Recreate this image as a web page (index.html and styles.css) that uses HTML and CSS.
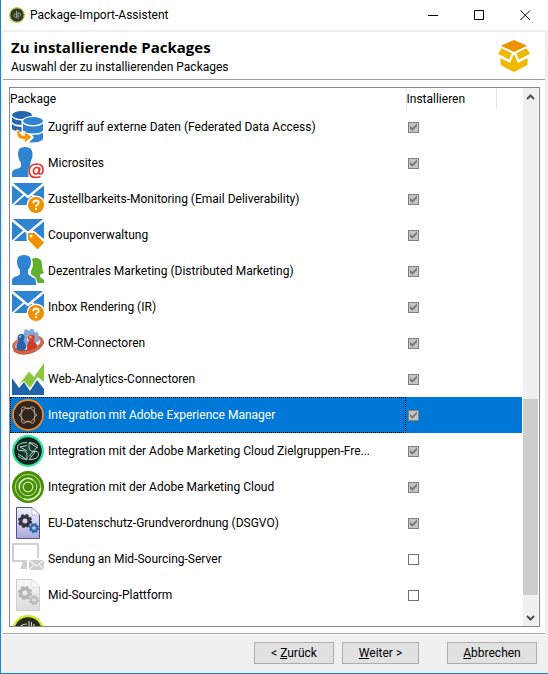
FILE: index.html
```html
<!DOCTYPE html>
<html lang="de">
<head>
<meta charset="utf-8">
<title>Package-Import-Assistent</title>
<link rel="stylesheet" href="styles.css">
</head>
<body>
<svg class="defs" aria-hidden="true">
  <defs>
    <linearGradient id="page-blue" x1="0" y1="0" x2="0" y2="1"><stop offset="0" stop-color="#f2f2fb"/><stop offset="1" stop-color="#a9a9dc"/></linearGradient>
    <linearGradient id="page-grey" x1="0" y1="0" x2="0" y2="1"><stop offset="0" stop-color="#f7f7f7"/><stop offset="1" stop-color="#dcdcdc"/></linearGradient>
    <radialGradient id="dark-green"><stop offset="0" stop-color="#1d4a3c"/><stop offset="1" stop-color="#0b1a17"/></radialGradient>
    <linearGradient id="ring-red" x1="0" y1="0" x2="0" y2="1"><stop offset="0" stop-color="#e08468"/><stop offset="1" stop-color="#b8432c"/></linearGradient>
  </defs>
  <symbol id="gear" viewBox="-8 -8 16 16">
    <circle r="4.500" fill="none" stroke="currentColor" stroke-width="3.600"/>
    <circle r="6.500" fill="none" stroke="currentColor" stroke-width="2" stroke-dasharray="2.900 2.205"/>
  </symbol>
  <symbol id="envelope" viewBox="0 0 32 32">
    <path fill="#2f84d1" d="M1 0H31L16 12.500Z"/>
    <path fill="#2f84d1" d="M0 2.500L11 11.500L0 21.500ZM32 2.500V20L21 11.500ZM12.500 12.800L16 15.500L19.500 12.800L30 22H2Z"/>
  </symbol>
  <symbol id="mail-question" viewBox="0 0 32 32">
    <use href="#envelope"/>
    <circle cx="24" cy="22" r="9.500" fill="#fff"/>
    <circle cx="24" cy="22" r="8" fill="#f09000"/>
    <path fill="none" stroke="#fff" stroke-width="1.800" d="M21.300 20.200Q21.300 17.500 24 17.500T26.700 19.800Q26.700 21 25 22Q24 22.700 24 24"/>
    <rect x="23" y="25" width="2" height="2" fill="#fff"/>
  </symbol>
</svg>

<main class="window">
  <header class="titlebar">
    <svg class="app-icon" viewBox="0 0 16 16" aria-hidden="true">
      <circle cx="8" cy="8" r="7.200" fill="#33372a" stroke="#a7c22b" stroke-width="1.200"/>
      <path fill="none" stroke="#a9ae9b" stroke-width=".9" d="M7.500 7H6.500Q5 7 5 8.500T6.500 10.500H7.500V4M9 12V6H10Q11.500 6 11.500 7.500T10.500 9.500"/>
    </svg>
    <span class="app-title">Package-Import-Assistent</span>
    <button class="caption" type="button" title="Minimieren"><svg viewBox="0 0 11 11"><path d="M0 5.500H10"/></svg></button>
    <button class="caption" type="button" title="Maximieren"><svg viewBox="0 0 11 11"><path d="M.5 .5H9.500V9.500H.5Z"/></svg></button>
    <button class="caption" type="button" title="Schließen"><svg viewBox="0 0 11 11"><path d="M.5 .5L10 10M10 .5L.5 10"/></svg></button>
  </header>

  <div class="frame">
    <section class="banner">
      <div class="banner-text">
        <h1>Zu installierende Packages</h1>
        <p>Auswahl der zu installierenden Packages</p>
      </div>
      <svg class="banner-logo" viewBox="0 0 32 32" aria-hidden="true">
        <path fill="#ee9200" d="M16 0L29 5.700L16 12L3 5.700Z"/>
        <path fill="#efb902" d="M3.500 8.300L13.800 13.300L11 19.500L0 13.700ZM28.500 8.300L18.200 13.300L21 19.500L32 13.700Z"/>
        <path fill="#efb902" d="M2.500 18L12 23L15.500 15H16.500L20 23L29.500 18V25L16 32L2.500 25Z"/>
      </svg>
    </section>

    <section class="content">
      <div class="list">
        <div class="viewport">
          <table>
            <colgroup><col><col class="col-install"><col class="col-rest"></colgroup>
            <thead><tr><th>Package</th><th>Installieren</th><th></th></tr></thead>
            <tbody>
              <tr><td><label for="p1"><svg class="icon" viewBox="0 0 32 32">
                <ellipse cx="10" cy="4" rx="10" ry="4" fill="#2466ae"/>
                <path fill="#2466ae" d="M0 6Q3 9.500 10 9.500V14Q2 14 0 11ZM0 13Q3 16 10 16V21Q2 20 0 18Z"/>
                <path fill="#fff" d="M9.500 9.500Q12 5 21 5T32 9.500V32H18L9.500 22Z"/>
                <ellipse cx="21" cy="10" rx="10" ry="4" fill="#2f84d1"/>
                <path fill="#2f84d1" d="M11 12.500Q14 15.500 21 15.500T31 12.500V19.500Q29 22.500 21 22.500T11 19.500ZM20 24Q28 24 31 21.500V28Q28 32 17 31.500L22 26.500Z"/>
                <path fill="#f09a00" stroke="#fff" stroke-width=".8" d="M4.500 19Q8 19 8 21Q8 24.500 12.500 24.500V20.500L20 26L12.500 32V28.500Q4.500 28.500 5 22Z"/>
              </svg><span>Zugriff auf externe Daten (Federated Data Access)</span></label></td><td><input type="checkbox" id="p1" checked disabled></td><td></td></tr>

              <tr><td><label for="p2"><svg class="icon" viewBox="0 0 32 32">
                <path fill="#2f84d1" d="M6 6Q6 0 13 0T20.500 6Q21 10 19 14Q18 16 18 19Q15.500 22 16.500 30H0V26Q0 23 4 22Q9 21 9 19V16Q6 12 6 6Z"/>
                <path fill="none" stroke="#e73532" stroke-width="1.700" d="M28.500 29.500Q26.500 30.500 24 30.500Q17.200 30.500 17.200 24T24.500 17Q31 17 31 22.500Q31 27 28.300 27Q26.500 27 27 25L28 20.500M27 23.500Q26.500 27 24 27T21.500 24.500Q21.500 20.500 24.800 20.500Q27.500 20.500 27 23.500"/>
              </svg><span>Microsites</span></label></td><td><input type="checkbox" id="p2" checked disabled></td><td></td></tr>

              <tr><td><label for="p3"><svg class="icon" viewBox="0 0 32 32"><use href="#mail-question"/></svg><span>Zustellbarkeits-Monitoring (Email Deliverability)</span></label></td><td><input type="checkbox" id="p3" checked disabled></td><td></td></tr>

              <tr><td><label for="p4"><svg class="icon" viewBox="0 0 32 32">
                <use href="#envelope"/>
                <path fill="#f09000" stroke="#fff" stroke-width="3" paint-order="stroke" d="M16 15Q16 14 17 14H22.500L32 23.500L25.500 30.500L16 20.500Z"/>
                <circle cx="19" cy="17" r="1.500" fill="#fff"/>
              </svg><span>Couponverwaltung</span></label></td><td><input type="checkbox" id="p4" checked disabled></td><td></td></tr>

              <tr><td><label for="p5"><svg class="icon" viewBox="0 0 32 32">
                <path fill="#60b02c" d="M20 4Q21 2.500 25 3Q30 3.500 30 10Q30 15 32 18L28 19.500V22L32 25V28H25.500L24 23L19 19V16Q21.500 12 21 8Z"/>
                <path fill="#2f84d1" d="M5 6Q5 0 12 0T19 6Q19 12 16 15V18.500Q17 21 23 23.500Q24 25 24 30H0V25Q0 23 4 21.500Q8 20 8 18.500V15Q5 12 5 6Z"/>
              </svg><span>Dezentrales Marketing (Distributed Marketing)</span></label></td><td><input type="checkbox" id="p5" checked disabled></td><td></td></tr>

              <tr><td><label for="p6"><svg class="icon" viewBox="0 0 32 32"><use href="#mail-question"/></svg><span>Inbox Rendering (IR)</span></label></td><td><input type="checkbox" id="p6" checked disabled></td><td></td></tr>

              <tr><td><label for="p7"><svg class="icon" viewBox="0 0 32 32">
                <ellipse cx="16" cy="17" rx="14.500" ry="7" transform="rotate(-12 16 17)" fill="#e6e9f2" stroke="url(#ring-red)" stroke-width="3"/>
                <svg x="8" y="1" width="20" height="20" color="#7fa9dc"><use href="#gear"/></svg>
                <circle cx="9" cy="10.500" r="3.500" fill="#2d62a8"/>
                <path fill="#2d62a8" d="M7 13H11L14 18V22Q9 25 4.500 22V18Z"/>
                <circle cx="19.500" cy="11" r="3.400" fill="#d8452f"/>
                <path fill="#cf3b27" d="M17.500 13.500H21.500L25 18V22Q20 25 15 23V18Z"/>
                <path fill="none" stroke="#cc6247" stroke-width="3.500" d="M2 22.500Q8 28 18 25T30.500 15"/>
                <circle cx="8" cy="9.500" r="1.300" fill="#8db9ea"/><circle cx="18.500" cy="10" r="1.200" fill="#f5a899"/>
              </svg><span>CRM-Connectoren</span></label></td><td><input type="checkbox" id="p7" checked disabled></td><td></td></tr>

              <tr><td><label for="p8"><svg class="icon" viewBox="0 0 32 32">
                <path fill="#8dc63f" d="M32 0V19L25.500 14L18 25L12 18L7.500 21L17 8.500L22 14Z"/>
                <path fill="#1f63a8" d="M0 15L7 25L12 19L18 28L25 17L32 26V32H0Z"/>
              </svg><span>Web-Analytics-Connectoren</span></label></td><td><input type="checkbox" id="p8" checked disabled></td><td></td></tr>

              <tr class="selected"><td><label for="p9"><svg class="icon" viewBox="0 0 32 32">
                <circle cx="16" cy="16" r="15" fill="#32251f" stroke="#f08a20" stroke-width="1.800"/>
                <g fill="none" stroke="#c9b090" stroke-width=".9">
                  <circle cx="16" cy="16" r="7"/>
                  <path d="M13 8Q16 12 19 8Q23 7 22.500 11.500Q21 14 25 16Q21 18 22.500 20.500Q23 25 19 24Q16 20 13 24Q9 25 9.500 20.500Q11 18 7 16Q11 14 9.500 11.500Q9 7 13 8Z"/>
                </g>
              </svg><span>Integration mit Adobe Experience Manager</span></label></td><td><input type="checkbox" id="p9" checked disabled></td><td></td></tr>

              <tr><td><label for="p10"><svg class="icon" viewBox="0 0 32 32">
                <circle cx="16" cy="16" r="14.800" fill="url(#dark-green)" stroke="#2ce59b" stroke-width="2.200"/>
                <g fill="none" stroke="#c5e0d6" stroke-width=".9">
                  <path d="M15 7.500Q6 7.500 5.500 12T10 15.500Q15 15.500 15 20.500V24.500L6 19M15 10.500L8 12L15 16M6 21Q9 24.500 15 24.500"/>
                  <path d="M17 24.500Q26 24.500 26.500 20T22 16.500Q17 16.500 17 11.500V7.500L26 13M17 21.500L25 12M26 11Q23 7.500 17 7.500M17 24.500L23 17"/>
                </g>
              </svg><span>Integration mit der Adobe Marketing Cloud Zielgruppen-Fre...</span></label></td><td><input type="checkbox" id="p10" checked disabled></td><td></td></tr>

              <tr><td><label for="p11"><svg class="icon" viewBox="0 0 32 32">
                <circle cx="16" cy="16" r="16" fill="#479003"/>
                <g fill="none" stroke="#dcebc8">
                  <circle cx="16" cy="16" r="12.700" stroke-width=".8"/>
                  <path stroke-width="1.800" d="M28.500 17A12.500 12.500 0 0 1 12 28"/>
                  <circle cx="16" cy="16" r="8.800" stroke-width=".9"/>
                  <path stroke-width="1.600" d="M7.500 18A8.700 8.700 0 0 1 21 9"/>
                  <circle cx="16" cy="16" r="4.800" stroke-width="1.200"/>
                </g>
              </svg><span>Integration mit der Adobe Marketing Cloud</span></label></td><td><input type="checkbox" id="p11" checked disabled></td><td></td></tr>

              <tr><td><label for="p12"><svg class="icon" viewBox="0 0 32 32">
                <path fill="url(#page-blue)" stroke="#51518c" d="M4.500 .5H20L27.500 8V31.500H4.500Z"/>
                <path fill="#fff" stroke="#a4a4cc" stroke-width=".7" d="M20 .5V8H27.500Z"/>
                <svg x="5.500" y="6.500" width="15" height="15" color="#34363d"><use href="#gear"/></svg>
                <svg x="16.500" y="15.500" width="11" height="11" color="#2b6cae"><use href="#gear"/></svg>
              </svg><span>EU-Datenschutz-Grundverordnung (DSGVO)</span></label></td><td><input type="checkbox" id="p12" checked disabled></td><td></td></tr>

              <tr><td><label for="p13"><svg class="icon" viewBox="0 0 32 32">
                <path fill="none" stroke="#d0d0d0" stroke-width="2" d="M15 18H1V1H26V15"/>
                <path fill="#cecece" d="M10.500 19H15V26H8.500Z"/>
                <path fill="#cecece" d="M17 17H32V27H17Z"/>
                <path fill="none" stroke="#fff" d="M17 17L24.500 23L32 17M17 27L22 21.500M32 27L27 21.500"/>
              </svg><span>Sendung an Mid-Sourcing-Server</span></label></td><td><input type="checkbox" id="p13"></td><td></td></tr>

              <tr><td><label for="p14"><svg class="icon" viewBox="0 0 32 32">
                <path fill="url(#page-grey)" stroke="#cfcfcf" d="M4.500 .5H20L27.500 8V31.500H4.500Z"/>
                <path fill="#fff" stroke="#d8d8d8" stroke-width=".7" d="M20 .5V8H27.500Z"/>
                <svg x="5.500" y="6.500" width="15" height="15" color="#b5b5b5"><use href="#gear"/></svg>
                <svg x="16.500" y="15.500" width="11" height="11" color="#bdbdbd"><use href="#gear"/></svg>
              </svg><span>Mid-Sourcing-Plattform</span></label></td><td><input type="checkbox" id="p14"></td><td></td></tr>

              <tr><td><svg class="icon" viewBox="0 0 32 32">
                <circle cx="16" cy="16" r="14.800" fill="#282c1f" stroke="#cdeb1c" stroke-width="2.200"/>
                <path fill="none" stroke="#d5dac5" stroke-width="1.100" d="M17 6V20M19.500 7V22M15 9Q9 9 8 13M15 11.500Q12 11.500 11 14M22 9V20"/>
              </svg></td><td></td><td></td></tr>
            </tbody>
          </table>
        </div>
        <div class="scrollbar">
          <button type="button" title="Nach oben"><svg viewBox="0 0 9 6"><path d="M1 5L4.500 1.500L8 5"/></svg></button>
          <div class="track"><div class="before"></div><div class="thumb"></div><div class="after"></div></div>
          <button type="button" title="Nach unten"><svg viewBox="0 0 9 6"><path d="M1 1L4.500 4.500L8 1"/></svg></button>
        </div>
      </div>
    </section>

    <footer class="actions">
      <button type="button" class="back">&lt; <u>Z</u>urück</button>
      <button type="button" class="next"><u>W</u>eiter &gt;</button>
      <button type="button" class="cancel"><u>A</u>bbrechen</button>
    </footer>
  </div>
</main>
</body>
</html>
```
FILE: styles.css
```css
* { box-sizing: border-box; }

body {
  margin: 0;
  font-family: Roboto, "Open Sans", sans-serif;
  font-size: 12px;
  line-height: 16px;
  color: #000;
  background: #fff;
}

button { font: inherit; color: inherit; padding: 0; border: 0; background: none; }

.defs { position: absolute; width: 0; height: 0; }

.window {
  display: flex;
  flex-direction: column;
  height: 100vh;
  border-left: 1px solid #1883d7;
  border-bottom: 1px solid #1883d7;
}

.titlebar { display: flex; align-items: center; height: 30px; padding-left: 8px; flex: none; }
.app-icon { width: 16px; height: 16px; margin-right: 5px; }
.app-title { flex: 1; }
.caption { width: 46px; height: 30px; display: flex; align-items: center; justify-content: center; }
.caption svg { width: 11px; height: 11px; fill: none; stroke: #000; }

.frame {
  flex: 1;
  min-height: 0;
  display: flex;
  flex-direction: column;
  border: 2px solid #f0f0f0;
  border-right-width: 3px;
  border-bottom: 0;
}

.banner {
  display: flex;
  align-items: center;
  justify-content: space-between;
  height: 48px;
  flex: none;
  padding: 0 15px 0 8px;
  border-bottom: 1px solid #a0a0a0;
}
.banner h1 { margin: 0; font-family: "Open Sans", sans-serif; font-size: 15px; line-height: 20px; font-weight: 700; }
.banner p { margin: 2px 0 0; }
.banner-logo { width: 32px; height: 32px; }

.content { flex: 1; min-height: 0; display: flex; padding: 7px 5px 6px 6px; }
.list { flex: 1; min-width: 0; display: flex; border: 1px solid #828790; }
.viewport { flex: 1; min-width: 0; overflow: hidden; }

table { width: 100%; border-collapse: collapse; table-layout: fixed; }
.col-install { width: 90px; }
.col-rest { width: 26px; }
th { height: 21px; padding: 0; text-align: left; font-weight: 400; border-right: 1px solid #e5e5e5; }
th:last-child { border-right: 0; }
td { height: 36px; padding: 0; vertical-align: middle; }
td:first-child { padding-left: 2px; }
label { display: flex; align-items: center; gap: 4px; white-space: nowrap; }
.icon { display: block; width: 32px; height: 32px; flex: none; }

.selected { background: #0078d7; color: #fff; }
.selected td:first-child { outline: 1px dotted #000; outline-offset: -1px; }

input {
  appearance: none;
  display: block;
  width: 11px;
  height: 11px;
  margin: 0 0 0 2px;
  border: 1px solid #707070;
  background: #fff;
}
input:disabled { border-color: #808080; background: #c4c4c4; }
input:checked::before {
  content: "";
  display: block;
  width: 9px;
  height: 9px;
  background: #777;
  clip-path: polygon(10% 38%, 38% 62%, 88% 10%, 88% 38%, 38% 92%, 10% 66%);
}

.scrollbar { flex: none; width: 16px; margin-left: 1px; display: flex; flex-direction: column; background: #f0f0f0; border-right: 1px solid #fff; }
.scrollbar button { height: 17px; flex: none; display: flex; align-items: center; justify-content: center; }
.scrollbar svg { width: 9px; height: 6px; fill: none; stroke: #505050; stroke-width: 2; }
.track { flex: 1; display: flex; flex-direction: column; }
.before { flex: 294; }
.thumb { flex: 196; background: #cdcdcd; }
.after { flex: 14; }

.actions {
  flex: none;
  display: flex;
  gap: 8px;
  padding: 8px 8px 9px;
  justify-content: flex-end;
  background: #f0f0f0;
  border-top: 1px solid #a0a0a0;
  box-shadow: inset 0 1px #fff;
}
.actions button { height: 22px; background: #e1e1e1; border: 1px solid #adadad; }
.back { width: 80px; }
.next { width: 77px; }
.cancel { width: 90px; margin-left: 20px; }
```
